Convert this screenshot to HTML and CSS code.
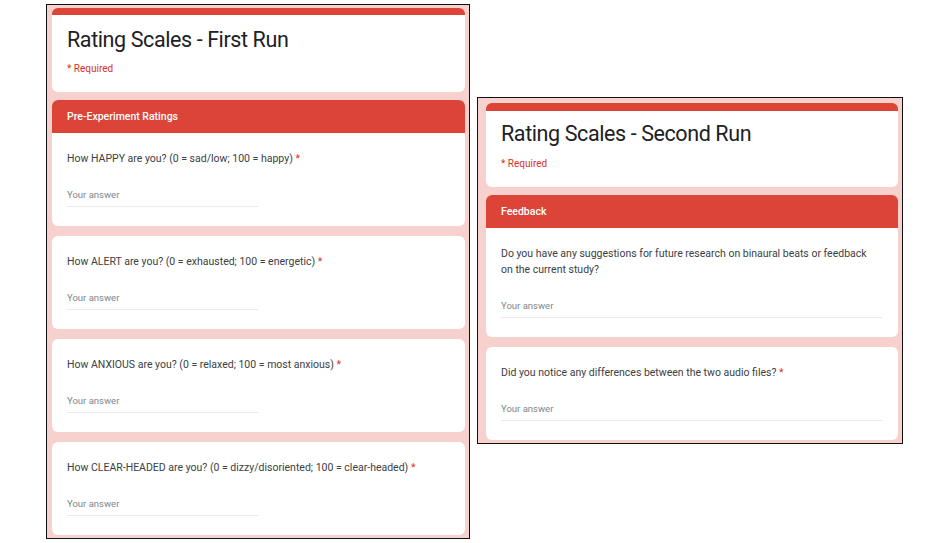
FILE: index.html
```html
<!DOCTYPE html>
<html lang="en">
<head>
<meta charset="utf-8">
<title>Rating Scales</title>
<link rel="stylesheet" href="styles.css">
</head>
<body>
<div class="shots">
  <section class="shot shot-first">
    <div class="card title-card">
      <h1 class="form-title">Rating Scales - First Run</h1>
      <p class="required-note">* Required</p>
    </div>
    <div class="card section-card">
      <div class="section-head">Pre-Experiment Ratings</div>
      <div class="question">
        <p class="q-text">How HAPPY are you? (0 = sad/low; 100 = happy) <span class="star">*</span></p>
        <div class="answer short">Your answer</div>
      </div>
    </div>
    <div class="card question">
      <p class="q-text">How ALERT are you? (0 = exhausted; 100 = energetic) <span class="star">*</span></p>
      <div class="answer short">Your answer</div>
    </div>
    <div class="card question">
      <p class="q-text">How ANXIOUS are you? (0 = relaxed; 100 = most anxious) <span class="star">*</span></p>
      <div class="answer short">Your answer</div>
    </div>
    <div class="card question">
      <p class="q-text">How CLEAR-HEADED are you? (0 = dizzy/disoriented; 100 = clear-headed) <span class="star">*</span></p>
      <div class="answer short">Your answer</div>
    </div>
  </section>

  <section class="shot shot-second">
    <div class="card title-card">
      <h1 class="form-title">Rating Scales - Second Run</h1>
      <p class="required-note">* Required</p>
    </div>
    <div class="card section-card">
      <div class="section-head">Feedback</div>
      <div class="question">
        <p class="q-text">Do you have any suggestions for future research on binaural beats or feedback on the current study?</p>
        <div class="answer long">Your answer</div>
      </div>
    </div>
    <div class="card question">
      <p class="q-text">Did you notice any differences between the two audio files? <span class="star">*</span></p>
      <div class="answer long">Your answer</div>
    </div>
  </section>
</div>
</body>
</html>
```

FILE: styles.css
```css
html, body {
  margin: 0;
  padding: 0;
  background: #ffffff;
}

body {
  font-family: Roboto, "Noto Sans", Arial, sans-serif;
  color: #202124;
}

.shots {
  display: flex;
  align-items: flex-start;
  gap: 7px;
  padding: 4px 0 0 46px;
}

.shot {
  box-sizing: border-box;
  border: 1px solid #111;
  background: #f6d1cd;
  overflow: hidden;
  display: flex;
  flex-direction: column;
}

.shot-first {
  width: 424px;
  height: 535px;
  padding: 3px 4px 0 5px;
}

.shot-second {
  width: 426px;
  height: 347px;
  margin-top: 93px;
  padding: 5px 4px 0 8px;
}

.card {
  background: #ffffff;
  border-radius: 6px;
  flex: none;
}

.card + .card {
  margin-top: 10px;
}

.title-card {
  border-top: 7px solid #db4437;
  padding: 10px 15px 16px;
}

.title-card .required-note {
  margin-top: 7px;
}

.shot-second .title-card {
  border-top-width: 8px;
  padding: 8px 15px 16px;
}

.shot-second .title-card .required-note {
  margin-top: 8px;
}

.title-card + .card {
  margin-top: 8px;
}

.form-title {
  margin: 0;
  font-family: Roboto, "Noto Sans", sans-serif;
  font-weight: 400;
  font-size: 21.5px;
  letter-spacing: -0.4px;
  line-height: 30px;
  color: #202124;
}

.required-note {
  margin: 8px 0 0;
  font-size: 10px;
  line-height: 14px;
  color: #d93025;
}

.section-card {
  overflow: hidden;
}

.section-head {
  background: #db4437;
  color: #ffffff;
  font-size: 10.5px;
  font-weight: 500;
  height: 33px;
  line-height: 33px;
  padding: 0 15px;
}

.question {
  padding: 18px 15px 19px;
}

.q-text {
  margin: 0;
  font-size: 10.5px;
  line-height: 16px;
  color: #3c4043;
}

.shot-second .q-text {
  margin-right: 12px;
}

.star {
  color: #d93025;
}

.answer {
  margin-top: 20px;
  font-size: 9.5px;
  line-height: 16px;
  color: #80868b;
  padding-bottom: 3px;
  border-bottom: 1px solid #e8eaed;
}

.answer.short {
  width: 191px;
}

.answer.long {
  margin-right: 1px;
}
```
